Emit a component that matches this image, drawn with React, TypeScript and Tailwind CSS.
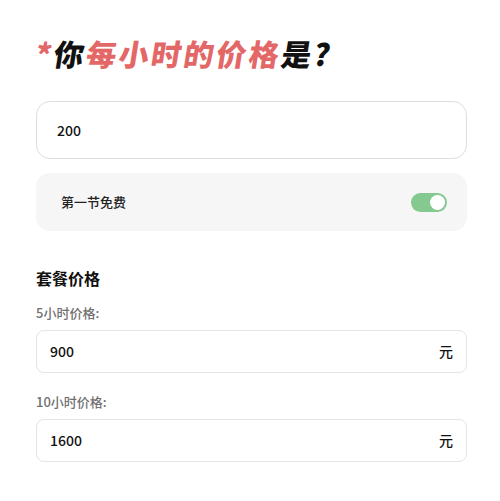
import { useState } from "react";

const font = { fontFamily: '"Noto Sans CJK SC", "Noto Sans", sans-serif' };

const PriceField = ({ label, value }: { label: string; value: string }) => {
   return (
      <div className="flex flex-col">
         <span className="text-[13px] font-medium text-[#707070] leading-[20px]">{label}</span>
         <div className="mt-[7px] h-[43px] rounded-[8px] border border-[#e4e4e4] bg-white flex items-center justify-between pl-[13px] pr-[13px]">
            <span className="text-[14px] font-medium text-[#111]">{value}</span>
            <span className="text-[14px] font-medium text-[#111]">元</span>
         </div>
      </div>
   );
};

const App = () => {
   const [free, setFree] = useState(true);
   return (
      <div className="w-[500px] h-[501px] bg-white pl-[36px] pr-[33px] pt-[31px]" style={font}>
         <h1 className="w-fit text-[30px] font-black leading-[44px] tracking-[2.5px] text-[#111] -skew-x-[9deg] origin-center">
            <span className="text-[#e46767]">*</span>你<span className="text-[#e46767]">每小时的价格</span>是?
         </h1>
         <div className="mt-[26px] h-[58px] rounded-[14px] border border-[#dedede] bg-white flex items-center px-[20px]">
            <span className="text-[14px] font-medium text-[#111]">200</span>
         </div>
         <div className="mt-[14px] h-[58px] rounded-[14px] bg-[#f6f6f6] flex items-center justify-between pl-[25px] pr-[20px]">
            <span className="text-[13px] font-medium text-[#222]">第一节免费</span>
            <button
               onClick={() => setFree(!free)}
               className={free ? "w-[36px] h-[19px] rounded-full bg-[#84c98f] flex items-center justify-end px-[2px]" : "w-[36px] h-[19px] rounded-full bg-[#d0d0d0] flex items-center justify-start px-[2px]"}
            >
               <span className="w-[15px] h-[15px] rounded-full bg-white block" />
            </button>
         </div>
         <h2 className="mt-[36px] text-[16px] font-bold text-[#111] leading-[22px]">套餐价格</h2>
         <div className="mt-[14px] flex flex-col gap-[19px]">
            <PriceField label="5小时价格:" value="900" />
            <PriceField label="10小时价格:" value="1600" />
         </div>
      </div>
   );
};

export default App;
